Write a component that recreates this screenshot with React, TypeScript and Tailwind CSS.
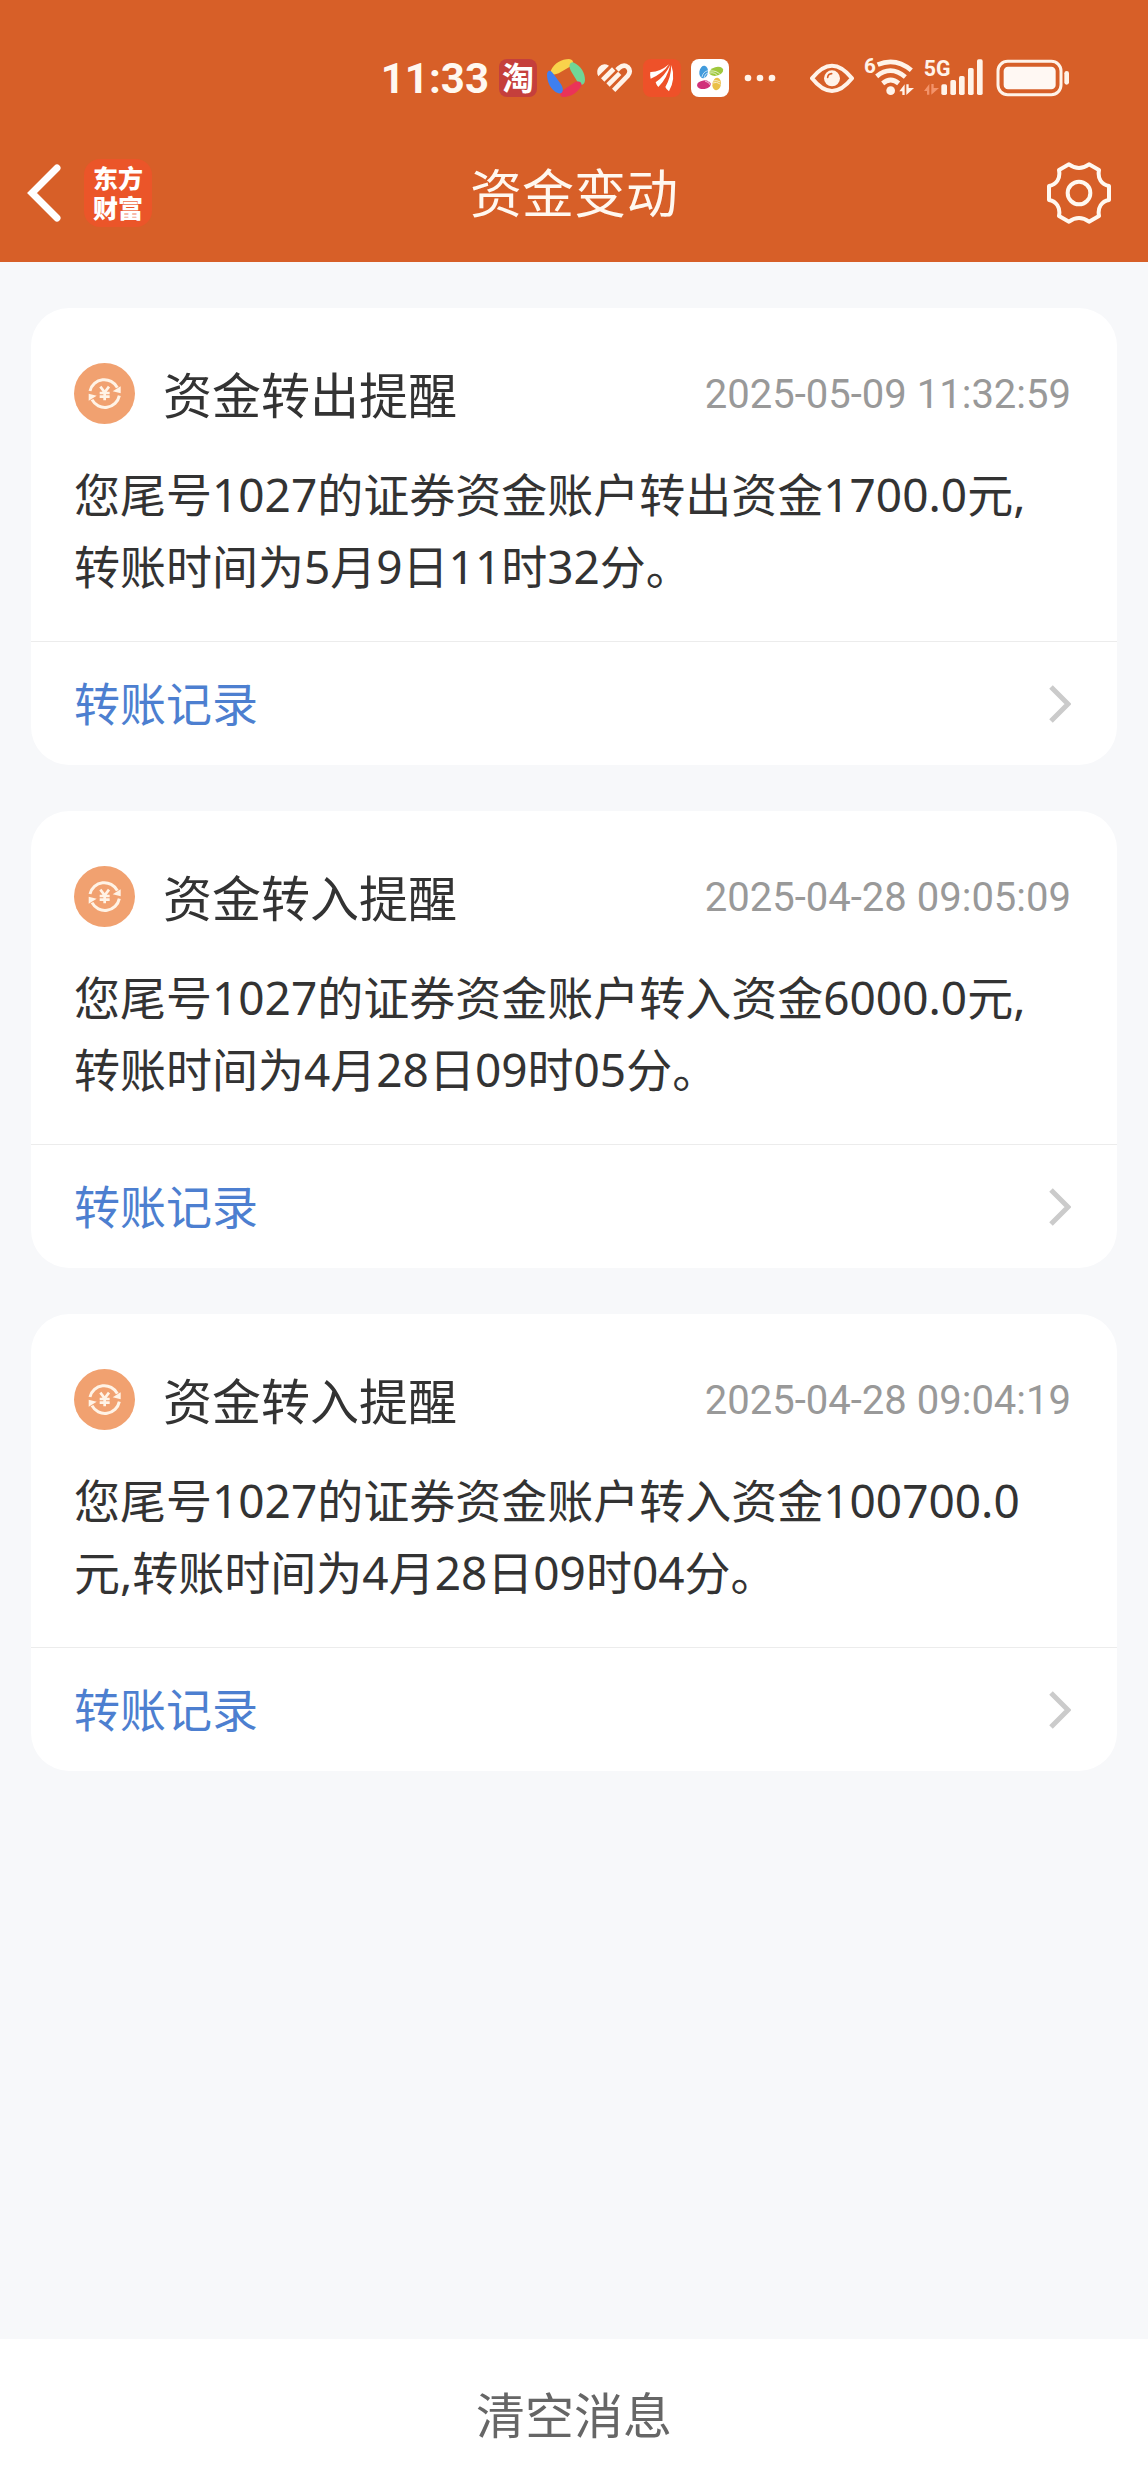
import React from "react";

interface Message {
  title: string;
  time: string;
  text: string;
}

const messages: Message[] = [
  {
    title: "资金转出提醒",
    time: "2025-05-09 11:32:59",
    text: "您尾号1027的证券资金账户转出资金1700.0元,转账时间为5月9日11时32分。",
  },
  {
    title: "资金转入提醒",
    time: "2025-04-28 09:05:09",
    text: "您尾号1027的证券资金账户转入资金6000.0元,转账时间为4月28日09时05分。",
  },
  {
    title: "资金转入提醒",
    time: "2025-04-28 09:04:19",
    text: "您尾号1027的证券资金账户转入资金100700.0元,转账时间为4月28日09时04分。",
  },
];

export default function App() {
  return (
    <div className="flex min-h-screen flex-col bg-[#f7f8fa] font-['Noto_Sans','Noto_Sans_CJK_SC',sans-serif] text-[#333333]">
      <header className="bg-[#d75f28] text-[#fff8f0]">
        <StatusBar />
        <NavBar />
      </header>
      <main className="flex grow flex-col gap-[46px] px-[31px] py-[46px]">
        {messages.map((item) => (
          <MessageCard key={item.time} {...item} />
        ))}
      </main>
      <button type="button" className="h-[153px] w-full bg-white text-[49px] text-[#666666]">
        清空消息
      </button>
    </div>
  );
}

function MessageCard({ title, time, text }: Readonly<Message>) {
  return (
    <article className="rounded-[38px] bg-white">
      <div className="pt-[49px] pr-[46px] pb-[39px] pl-[43px]">
        <div className="flex h-[72px] items-center">
          <TransferIcon />
          <h2 className="ml-7 grow pt-1 text-[49px] leading-[72px]">{title}</h2>
          <time className="pt-1 font-['Roboto',sans-serif] text-[40px] text-[#999999]">{time}</time>
        </div>
        <p className="mt-[29px] pr-2 text-[46px] leading-[72px]">{text}</p>
      </div>
      <a
        href="#records"
        className="flex h-[124px] items-center justify-between border-t border-[#ececec] pr-[46px] pl-[43px] text-[46px] text-[#4d7fd0]"
      >
        转账记录
        <svg className="h-10 w-6" viewBox="0 0 24 40" fill="none" stroke="#cbcbcb" strokeWidth="5">
          <path d="M4 3L21 20L4 37" />
        </svg>
      </a>
    </article>
  );
}

function TransferIcon() {
  return (
    <svg className="size-[61px] shrink-0" viewBox="0 0 183 183" fill="none">
      <circle cx="91.5" cy="91.5" r="91.5" fill="#f1a170" />
      <g stroke="#fff3e6" strokeWidth="9">
        <path d="M48 84a44 44 0 0 1 82-10" />
        <path d="M136 98a44 44 0 0 1-82 12" />
        <path d="M79 71l13 17l13-17M92 86v26M77 90h30M77 101h30" strokeWidth="8" />
      </g>
      <path d="M140 70v21l-24-6z" fill="#fff3e6" />
      <path d="M44 113v-21l24 6z" fill="#fff3e6" />
    </svg>
  );
}

function NavBar() {
  return (
    <nav className="grid h-[138px] grid-cols-[1fr_auto_1fr] items-center">
      <div className="flex items-center gap-[22px] pl-[26px]">
        <button type="button" aria-label="返回">
          <svg className="h-[60px] w-9" viewBox="0 0 36 60" fill="none" stroke="#ffffff" strokeWidth="7" strokeLinecap="round">
            <path d="M31 5L6 30L31 55" />
          </svg>
        </button>
        <a
          href="#home"
          className="flex size-[68px] flex-col items-center justify-center rounded-2xl bg-[#eb5529] text-[25px] leading-[30px] font-black text-white"
        >
          <span>东方</span>
          <span>财富</span>
        </a>
      </div>
      <h1 className="text-[52px]">资金变动</h1>
      <button type="button" aria-label="设置" className="mr-[37px] justify-self-end">
        <svg className="h-[62px] w-16" viewBox="0 0 192 186" fill="none" stroke="#fff8f0" strokeWidth="12" strokeLinejoin="round">
          <path d="M66 7Q96 29 126 7L156 24C151 50 164 68 186 72V114C164 118 151 136 156 162L126 179Q96 157 66 179L36 162C41 136 28 118 6 114V72C28 68 41 50 36 24Z" />
          <circle cx="96" cy="93" r="34" />
        </svg>
      </button>
    </nav>
  );
}

function StatusBar() {
  return (
    <div className="flex h-[124px] items-center justify-end gap-[10px] pt-8 pr-[79px]">
      <span className="font-['Roboto',sans-serif] text-[42px] font-bold">11:33</span>
      <span className="flex size-[38px] items-center justify-center rounded-lg bg-[#c53f3c] text-[32px] leading-[38px] font-bold text-white">
        淘
      </span>
      <PetalsIcon />
      <HeartIcon />
      <WingIcon />
      <PinwheelIcon />
      <svg className="h-[38px] w-[42px]" viewBox="0 0 42 38" fill="#fff3e9">
        <circle cx="9" cy="19" r="3.3" />
        <circle cx="21" cy="19" r="3.3" />
        <circle cx="33" cy="19" r="3.3" />
      </svg>
      <EyeIcon />
      <WifiIcon />
      <SignalIcon />
      <BatteryIcon />
    </div>
  );
}

function PetalsIcon() {
  return (
    <svg className="size-[38px]" viewBox="0 0 114 114">
      <path d="M12 34C22 12 44 0 66 0C84 2 80 18 66 25L35 43C20 50 8 46 12 34Z" fill="#f9d34b" />
      <path d="M78 10C102 20 114 42 114 64C112 84 98 78 90 66L74 40C64 24 66 10 78 10Z" fill="#6fd697" />
      <path d="M103 80C92 102 70 114 46 114C34 108 42 98 50 92L80 72C92 64 106 68 103 80Z" fill="#ea3358" />
      <path d="M34 103C10 92 0 70 0 44C4 28 14 36 20 46L42 76C52 92 48 106 34 103Z" fill="#3f7ff0" />
    </svg>
  );
}

function HeartIcon() {
  return (
    <svg className="size-[38px]" viewBox="0 0 114 114" fill="none" stroke="#fff3e9" strokeWidth="14">
      <path d="M10 52Q2 36 12 24Q24 10 42 20Z" fill="#fff3e9" stroke="none" />
      <path d="M23 63L56 30" />
      <path d="M39 78L74 43" />
      <path d="M56 94L98 51Q110 36 98 24Q86 15 72 27L66 33" />
    </svg>
  );
}

function WingIcon() {
  return (
    <svg className="size-[38px] rounded-lg bg-[#ee5129]" viewBox="0 0 114 114" fill="#ffffff">
      <path d="M22 39Q50 40 78 16Q60 44 23 59Q20 50 22 39Z" />
      <path d="M82 17Q73 57 46 84Q40 78 38 70Q66 50 82 17Z" />
      <path d="M85 18Q99 60 78 97Q70 92 67 84Q84 55 85 18Z" />
    </svg>
  );
}

function PinwheelIcon() {
  return (
    <svg className="size-[38px] rounded-lg bg-white" viewBox="0 0 114 114">
      <ellipse cx="38" cy="39" rx="13" ry="19" fill="#419bdc" transform="rotate(8 38 39)" />
      <ellipse cx="76" cy="37" rx="21" ry="13" fill="#9fc83d" transform="rotate(-15 76 37)" />
      <ellipse cx="39" cy="77" rx="21" ry="13" fill="#d13079" transform="rotate(-8 39 77)" />
      <ellipse cx="77" cy="75" rx="13" ry="19" fill="#eabf48" transform="rotate(8 77 75)" />
      <g fill="none" stroke="#ffffff" strokeWidth="2">
        <path d="M33 54Q36 38 51 35M39 57Q41 44 52 41M56 42Q72 39 79 50M57 36Q77 34 88 47" />
        <path d="M42 66Q56 70 59 80M49 65Q61 70 63 77M66 66Q76 62 88 69M65 72Q77 66 89 76" />
      </g>
    </svg>
  );
}

function EyeIcon() {
  return (
    <svg className="ml-[19px] h-[38px] w-11" viewBox="0 0 132 114" fill="none">
      <path d="M6 58Q66-18 126 58Q66 134 6 58Z" stroke="#fff3e9" strokeWidth="12" strokeLinejoin="round" />
      <circle cx="66" cy="58" r="24" fill="#fff3e9" />
      <path d="M53 55Q54 45 65 44" stroke="#d75f28" strokeWidth="5" strokeLinecap="round" />
    </svg>
  );
}

function WifiIcon() {
  return (
    <svg className="h-[38px] w-[50px] overflow-visible" viewBox="0 0 150 114" fill="none" stroke="#fff3e9">
      <text x="0" y="42" fontSize="62" fontWeight="700" fontFamily="Roboto, sans-serif" fill="#fff3e9" stroke="none">
        6
      </text>
      <g strokeWidth="14">
        <path d="M41 17Q95-6 142 34" />
        <path d="M38 52Q80 17 124 54" />
        <path d="M56 73Q80 53 104 73" />
      </g>
      <circle cx="80" cy="95" r="13" fill="#fff3e9" stroke="none" />
      <path d="M106 97L122 76V108H115V97ZM127 76H134V87H150L127 108Z" fill="#fff3e9" stroke="none" />
    </svg>
  );
}

function SignalIcon() {
  return (
    <svg className="h-[38px] w-[60px] overflow-visible" viewBox="0 0 180 114" fill="#fff3e9">
      <text x="-1" y="51" fontSize="64" fontWeight="700" fontFamily="Roboto, sans-serif">
        5G
      </text>
      <path d="M0 96L16 75V107H9V96ZM22 75H29V87H45L22 107Z" fill="#f3936a" />
      <rect x="52" y="76" width="17" height="32" rx="5" />
      <rect x="79" y="63" width="17" height="45" rx="5" />
      <rect x="105" y="51" width="17" height="57" rx="5" />
      <rect x="132" y="27" width="17" height="81" rx="5" />
      <rect x="159" y="1" width="17" height="107" rx="5" />
    </svg>
  );
}

function BatteryIcon() {
  return (
    <svg className="h-[38px] w-[75px]" viewBox="0 0 225 114">
      <rect x="12" y="7" width="189" height="100" rx="29" fill="none" stroke="#fff3e9" strokeWidth="9" />
      <rect x="29" y="23" width="156" height="68" rx="13" fill="#fff8f3" />
      <rect x="211" y="36" width="14" height="41" rx="7" fill="#fff3e9" />
    </svg>
  );
}
